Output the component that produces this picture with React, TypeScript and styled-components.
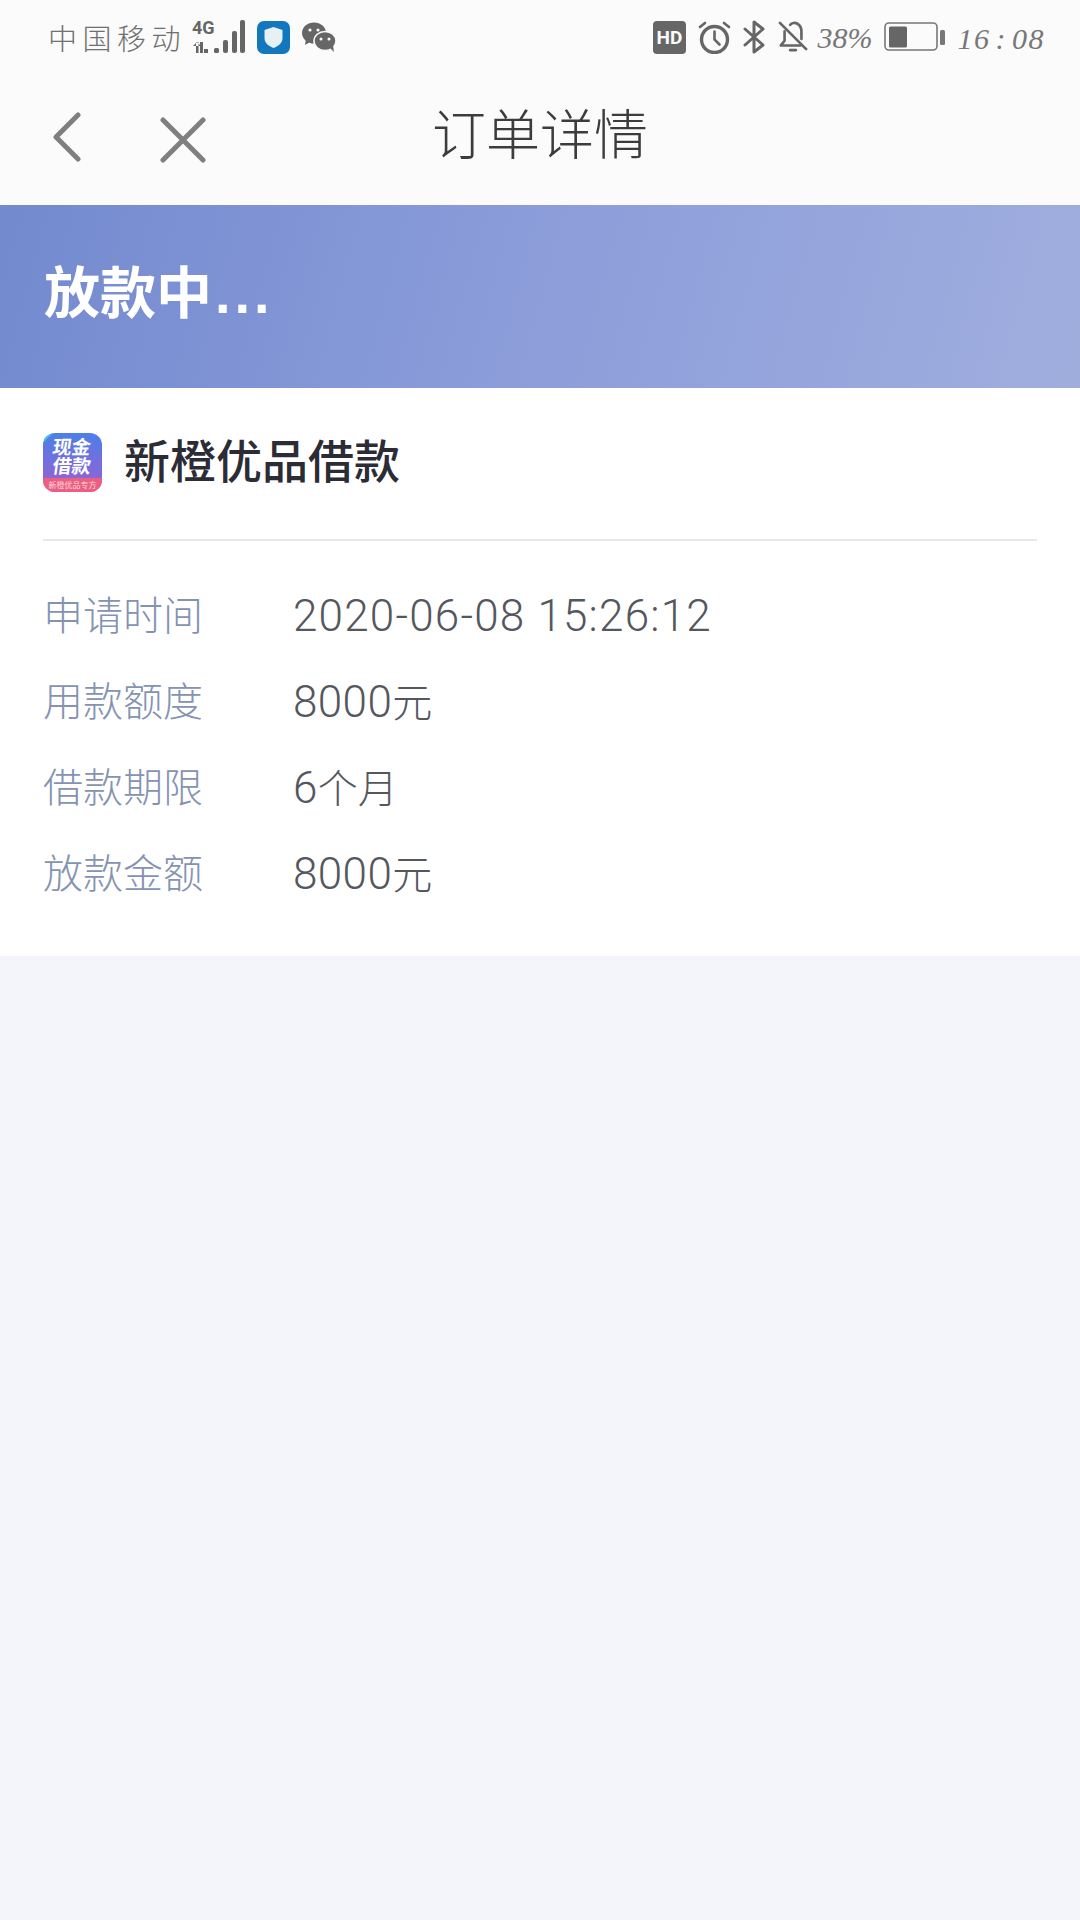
import styled, { createGlobalStyle } from "styled-components";

const cjk = `"Noto Sans CJK SC", "Noto Sans", sans-serif`;

const Global = createGlobalStyle`
  html, body {
    margin: 0;
    padding: 0;
    background: #f3f5fa;
  }
  * {
    box-sizing: border-box;
  }
`;

const Page = styled.div`
  width: 1080px;
  height: 1920px;
  background: #f3f5fa;
  font-family: ${cjk};
  overflow: hidden;
`;

const Header = styled.div`
  height: 205px;
  background: #fbfbfb;
`;

const StatusBar = styled.div`
  height: 74px;
  padding: 15px 35px 0 48px;
  display: flex;
  justify-content: space-between;
  align-items: flex-start;
  color: #666;
`;

const StatusGroup = styled.div`
  display: flex;
  align-items: center;
  height: 44px;
`;

const Carrier = styled.span`
  font-size: 29px;
  font-weight: 300;
  letter-spacing: 5.5px;
  line-height: 44px;
  color: #707070;
  margin-right: 6px;
  white-space: nowrap;
`;

const Percent = styled.span`
  font-family: "Liberation Serif", serif;
  font-style: italic;
  font-size: 30px;
  color: #777;
  line-height: 40px;
  margin: 2px 11px 0 0;
`;

const Clock = styled.span`
  font-family: "Liberation Serif", serif;
  font-style: italic;
  font-size: 30px;
  letter-spacing: 1.5px;
  color: #777;
  line-height: 40px;
  margin: 3px 0 0 13px;
`;

const ClockColon = styled.span`
  margin: 0 5px;
`;

const Icon = styled.svg<{ $gap?: number }>`
  display: block;
  flex: none;
  margin-right: ${(p) => p.$gap ?? 0}px;
`;

const NavBar = styled.div`
  height: 131px;
  padding: 0 0 0 52px;
  display: flex;
  align-items: flex-start;
  position: relative;
`;

const NavIcons = styled.div`
  display: flex;
  align-items: flex-start;
  gap: 78px;
  padding-top: 38px;
`;

const NavTitle = styled.div`
  position: absolute;
  left: 0;
  right: 0;
  top: 21px;
  text-align: center;
  font-size: 54px;
  font-weight: 300;
  line-height: 74px;
  color: #3c3c3c;
`;

const Banner = styled.div`
  height: 183px;
  padding-left: 44px;
  display: flex;
  align-items: center;
  background: linear-gradient(105deg, #738acf 0%, #8c9dda 50%, #a0aede 100%);
`;

const BannerTitle = styled.div`
  font-family: "Liberation Sans", ${cjk};
  font-size: 56px;
  font-weight: 700;
  color: #fff;
  line-height: 74px;
  padding-bottom: 6px;
`;

const Dots = styled.span`
  margin-left: 3px;
  letter-spacing: 4px;
`;

const Card = styled.div`
  height: 568px;
  background: #fff;
  padding: 0 43px;
`;

const Brand = styled.div`
  height: 153px;
  padding-bottom: 2px;
  display: flex;
  align-items: center;
  gap: 22px;
  border-bottom: 2px solid #e6e8ec;
`;

const BrandName = styled.div`
  font-size: 46px;
  font-weight: 500;
  color: #2c2c36;
  line-height: 60px;
  padding-bottom: 10px;
`;

const Logo = styled.div`
  width: 59px;
  height: 59px;
  border-radius: 12px;
  background: linear-gradient(180deg, #4d7fe8 0%, #8468d8 70%, #b060c0 100%);
  position: relative;
  overflow: hidden;
  flex: none;
  display: flex;
  flex-direction: column;
  align-items: center;
  padding-top: 3px;
  color: #fff;
`;

const LogoLine = styled.div`
  font-size: 19px;
  font-weight: 700;
  line-height: 19px;
  white-space: nowrap;
  transform: skewX(-8deg);
`;

const LogoStrip = styled.div`
  position: absolute;
  left: 0;
  right: 0;
  bottom: 0;
  height: 14px;
  background: #ec5f83;
  font-size: 8px;
  line-height: 14px;
  text-align: center;
  white-space: nowrap;
  color: #ffd7de;
`;

const LogoCorner = styled.div`
  position: absolute;
  left: -7px;
  top: -7px;
  width: 14px;
  height: 14px;
  background: #3fc4e0;
  transform: rotate(45deg);
`;

const Rows = styled.div`
  padding-top: 31px;
`;

const Row = styled.div`
  height: 86px;
  display: flex;
  align-items: center;
`;

const Label = styled.div`
  width: 250px;
  font-size: 40px;
  font-weight: 300;
  color: #8593b2;
  line-height: 56px;
  padding-bottom: 4px;
`;

const Value = styled.div`
  font-size: 40px;
  font-weight: 300;
  color: #55575e;
  line-height: 56px;
  white-space: nowrap;
`;

const Digits = styled.span<{ $spacing: number }>`
  font-family: "Roboto", sans-serif;
  font-size: 44px;
  font-weight: 300;
  letter-spacing: ${(p) => p.$spacing}px;
`;

const rows = [
  { label: "申请时间", digits: "2020-06-08 15:26:12", unit: "", spacing: 1.2 },
  { label: "用款额度", digits: "8000", unit: "元", spacing: 0.4 },
  { label: "借款期限", digits: "6", unit: "个月", spacing: 0.4 },
  { label: "放款金额", digits: "8000", unit: "元", spacing: 0.4 },
];

function SignalIcon() {
  return (
    <Icon width="53" height="42" viewBox="0 -3 53 42" $gap={12} fill="#666">
      <text x="0" y="15" fontFamily="Roboto, sans-serif" fontWeight="700" fontSize="18">
        4G
      </text>
      <path d="M4 23v11h2.5V23zM1 27l4-4 4 4zM8 23h3v11H8zM12 30h4v4h-4z" />
      <rect x="22" y="29" width="5" height="5" rx="1.5" />
      <rect x="31" y="21" width="5" height="13" rx="2" />
      <rect x="40" y="12" width="5" height="22" rx="2" />
      <rect x="48" y="1" width="5" height="33" rx="2" />
    </Icon>
  );
}

function ShieldIcon() {
  return (
    <Icon width="33" height="33" viewBox="0 0 33 33" $gap={12}>
      <rect width="33" height="33" rx="7" fill="#1277bd" />
      <path d="M16.5 6l9 3v8c0 5-4 8-9 10-5-2-9-5-9-10V9z" fill="#e6f1f6" />
    </Icon>
  );
}

function WechatIcon() {
  return (
    <Icon width="34" height="30" viewBox="0 0 34 30" fill="#666">
      <ellipse cx="12" cy="11" rx="12" ry="10.5" />
      <path d="M4 17l-1 6 7-4z" />
      <ellipse cx="23" cy="19" rx="11" ry="9.5" fill="#666" stroke="#fbfbfb" strokeWidth="1.5" />
      <path d="M28 26l4 4-1-7z" />
      <circle cx="8" cy="8" r="1.6" fill="#fbfbfb" />
      <circle cx="16" cy="8" r="1.6" fill="#fbfbfb" />
      <circle cx="19" cy="17" r="1.5" fill="#fbfbfb" />
      <circle cx="27" cy="17" r="1.5" fill="#fbfbfb" />
    </Icon>
  );
}

function HdIcon() {
  return (
    <Icon width="33" height="33" viewBox="0 0 33 33" $gap={12}>
      <rect width="33" height="33" rx="4" fill="#666" />
      <text x="16.5" y="23" textAnchor="middle" fontFamily="Roboto, sans-serif" fontWeight="700" fontSize="19" fill="#fbfbfb">
        HD
      </text>
    </Icon>
  );
}

function AlarmIcon() {
  return (
    <Icon width="33" height="33" viewBox="0 0 33 33" $gap={12} fill="none" stroke="#666" strokeLinecap="round">
      <circle cx="16.5" cy="18.5" r="13" strokeWidth="3.4" />
      <path d="M16.5 10.5v8l5 5" strokeWidth="2.6" />
      <path d="M2 6l5-4M31 6l-5-4" strokeWidth="2.6" />
    </Icon>
  );
}

function BluetoothIcon() {
  return (
    <Icon width="22" height="34" viewBox="0 0 22 34" $gap={13} fill="none" stroke="#666" strokeWidth="3" strokeLinejoin="round" strokeLinecap="round">
      <path d="M2 9l18 16-9 7V2l9 7L2 25" />
    </Icon>
  );
}

function MutedBellIcon() {
  return (
    <Icon width="30" height="34" viewBox="0 0 32 34" $gap={10} fill="none" stroke="#666" strokeWidth="2.8" strokeLinecap="round" strokeLinejoin="round">
      <path d="M2 2l28 28" />
      <path d="M13 4c1-2 5-3 8-1 3 2 4 5 4 8v8" />
      <path d="M7 11v10l-4 5h21" />
      <path d="M13 31h6" />
    </Icon>
  );
}

function BatteryIcon() {
  return (
    <Icon width="61" height="30" viewBox="0 0 61 30">
      <rect x="1" y="1" width="52" height="27" rx="4" fill="none" stroke="#777" strokeWidth="1.6" />
      <rect x="5" y="4.5" width="18" height="21" rx="1.5" fill="#666" />
      <rect x="56" y="8" width="5" height="15" rx="1.5" fill="#777" />
    </Icon>
  );
}

function BackIcon() {
  return (
    <Icon width="30" height="52" viewBox="0 0 30 52" fill="none" stroke="#7f7f7f" strokeWidth="5" strokeLinecap="round" strokeLinejoin="round">
      <path d="M26 3L4 25l22 22" />
    </Icon>
  );
}

function CloseIcon() {
  return (
    <Icon width="46" height="46" viewBox="0 0 46 46" style={{ marginTop: 5 }} fill="none" stroke="#7f7f7f" strokeWidth="5" strokeLinecap="round">
      <path d="M3 3l40 40M43 3L3 43" />
    </Icon>
  );
}

export default function App() {
  return (
    <Page>
      <Global />
      <Header>
        <StatusBar>
          <StatusGroup>
            <Carrier>中国移动</Carrier>
            <SignalIcon />
            <ShieldIcon />
            <WechatIcon />
          </StatusGroup>
          <StatusGroup>
            <HdIcon />
            <AlarmIcon />
            <BluetoothIcon />
            <MutedBellIcon />
            <Percent>38%</Percent>
            <BatteryIcon />
            <Clock>
              16<ClockColon>:</ClockColon>08
            </Clock>
          </StatusGroup>
        </StatusBar>
        <NavBar>
          <NavIcons>
            <BackIcon />
            <CloseIcon />
          </NavIcons>
          <NavTitle>订单详情</NavTitle>
        </NavBar>
      </Header>
      <Banner>
        <BannerTitle>
          放款中<Dots>...</Dots>
        </BannerTitle>
      </Banner>
      <Card>
        <Brand>
          <Logo>
            <LogoCorner />
            <LogoLine>现金</LogoLine>
            <LogoLine>借款</LogoLine>
            <LogoStrip>新橙优品专方</LogoStrip>
          </Logo>
          <BrandName>新橙优品借款</BrandName>
        </Brand>
        <Rows>
          {rows.map((row) => (
            <Row key={row.label}>
              <Label>{row.label}</Label>
              <Value>
                <Digits $spacing={row.spacing}>{row.digits}</Digits>
                {row.unit}
              </Value>
            </Row>
          ))}
        </Rows>
      </Card>
    </Page>
  );
}
